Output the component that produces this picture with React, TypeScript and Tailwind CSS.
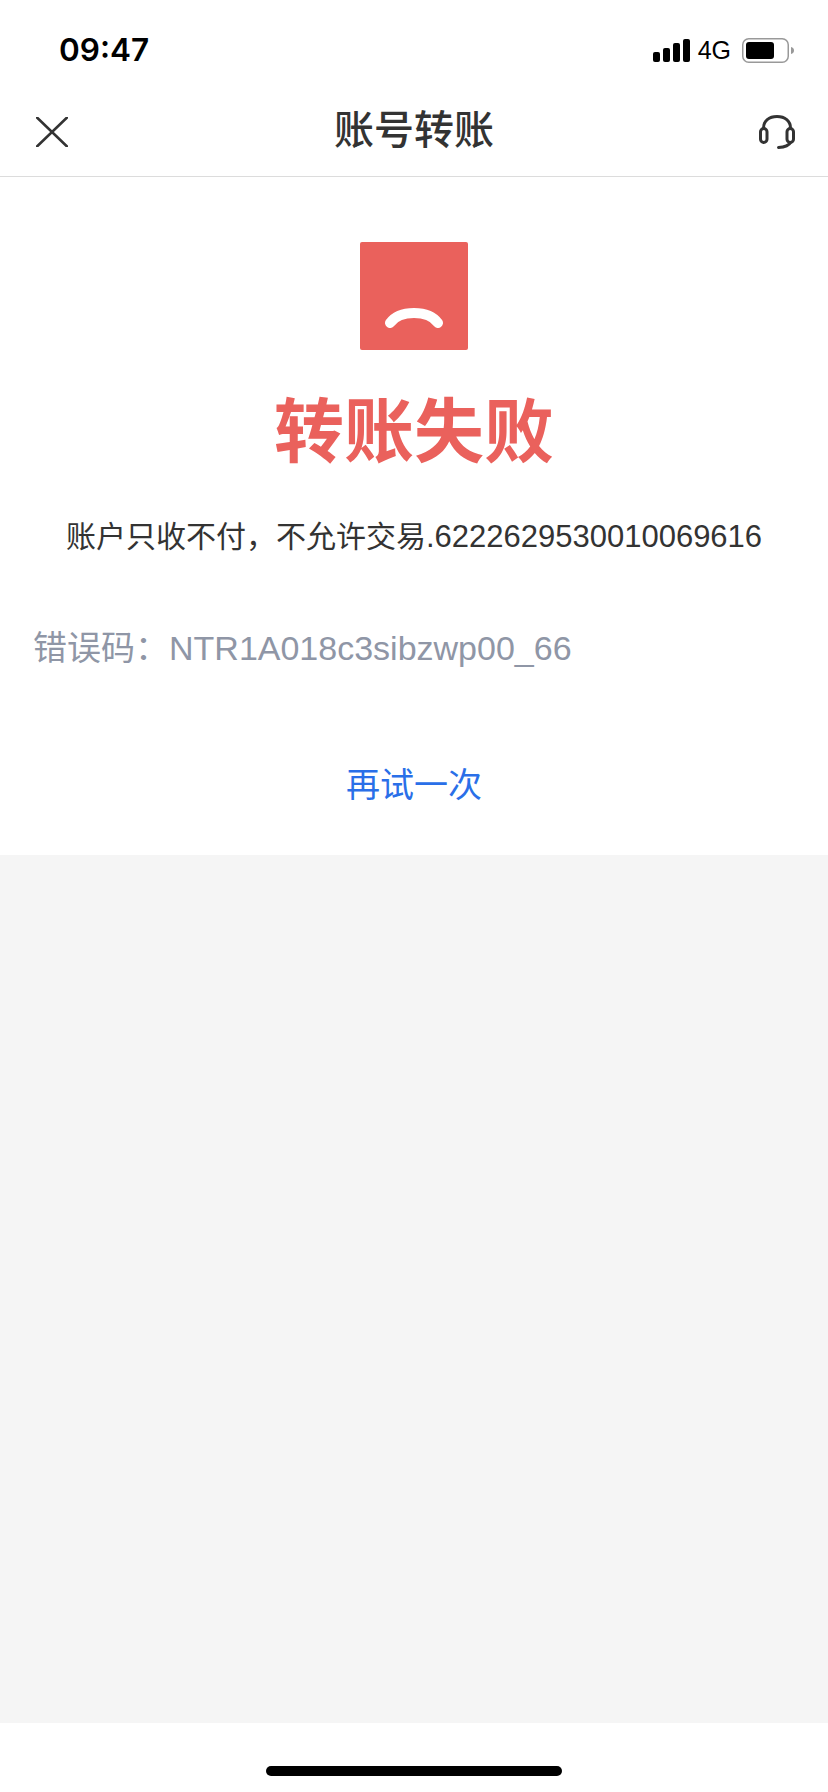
import React from "react";

const cjk = "font-['Liberation_Sans','Noto_Sans_CJK_SC',sans-serif]";

function StatusIcons() {
  return (
    <div className="flex items-center">
      {/* signal */}
      <div className="flex items-end gap-[3px] h-[23px]">
        <div className="w-[7px] h-[10px] bg-black rounded-[2px]" />
        <div className="w-[7px] h-[14px] bg-black rounded-[2px]" />
        <div className="w-[7px] h-[19px] bg-black rounded-[2px]" />
        <div className="w-[7px] h-[23px] bg-black rounded-[2px]" />
      </div>
      <span className="ml-[8px] text-[25px] leading-[30px] text-black">4G</span>
      {/* battery */}
      <svg className="ml-[11px]" width="52" height="25" viewBox="0 0 52 25" fill="none">
        <rect x="0.75" y="0.75" width="45.5" height="23.5" rx="6" stroke="#999" strokeWidth="1.5" />
        <rect x="4" y="4" width="28" height="17" rx="3" fill="#000" />
        <path d="M49 9c2 .6 3 1.8 3 3.500s-1 2.900-3 3.500z" fill="#999" />
      </svg>
    </div>
  );
}

function CloseIcon() {
  return (
    <svg width="32" height="30" viewBox="0 0 32 30" fill="none">
      <path d="M1 .5L31 29.500M31 .5L1 29.500" stroke="#333" strokeWidth="2.6" strokeLinecap="round" />
    </svg>
  );
}

function HeadsetIcon() {
  return (
    <svg width="36" height="34" viewBox="0 0 36 34" fill="none" stroke="#333" strokeWidth="3" strokeLinecap="round">
      <path d="M4.500 13C4.500 6 10 1.500 18 1.500S31.500 6 31.500 13" />
      <rect x="1.500" y="13.500" width="6.500" height="14" rx="3.250" />
      <rect x="28" y="13.500" width="6.500" height="14" rx="3.250" />
      <path d="M31.500 27.500c-1.500 3-5.500 4.500-12 5" />
    </svg>
  );
}

function SadFace() {
  return (
    <div className="w-[108px] h-[108px] bg-[#ea615c] rounded-[2px] flex justify-center items-end pb-[22px]">
      <svg width="58" height="22" viewBox="0 0 58 22" fill="none">
        <path d="M5 17C10 10 18 7 29 7S48 10 53 17" stroke="#fff" strokeWidth="10" strokeLinecap="round" />
      </svg>
    </div>
  );
}

export default function App() {
  return (
    <div className={`w-[828px] h-[1792px] flex flex-col bg-white ${cjk}`}>
      {/* status bar */}
      <div className="h-[88px] pl-[59px] pr-[34px] flex items-start justify-between">
        <span className="mt-[30px] text-[31.500px] leading-[40px] font-semibold text-black font-['Inter',sans-serif]">09:47</span>
        <div className="mt-[35px]">
          <StatusIcons />
        </div>
      </div>

      {/* header */}
      <div className="h-[89px] border-b border-[#dcdcdc] pl-[36px] pr-[33px] flex items-center justify-between relative">
        <CloseIcon />
        <h1 className="absolute left-0 right-0 pb-[4px] text-center text-[40px] leading-[50px] font-medium text-[#333]">账号转账</h1>
        <HeadsetIcon />
      </div>

      {/* result */}
      <div className="h-[678px] flex flex-col items-center pt-[65px]">
        <SadFace />
        <h2 className="mt-[43px] text-[70px] leading-[80px] font-bold text-[#ea615c]">转账失败</h2>
        <p className="mt-[43px] text-[30px] leading-[42px] text-[#333] whitespace-nowrap">
          账户只收不付，不允许交易<span className="text-[31px]">.6222629530010069616</span>
        </p>
        <p className="mt-[66px] w-full pl-[33px] text-[34px] leading-[48px] text-[#8f96a6] whitespace-nowrap">错误码：NTR1A018c3sibzwp00_66</p>
        <button className="mt-[89px] text-[34px] leading-[48px] text-[#2a6fe8]">再试一次</button>
      </div>

      <div className="h-[868px] bg-[#f5f5f5]" />

      {/* home indicator */}
      <div className="flex-1 flex justify-center pt-[43px]">
        <div className="w-[296px] h-[10px] rounded-full bg-black" />
      </div>
    </div>
  );
}
